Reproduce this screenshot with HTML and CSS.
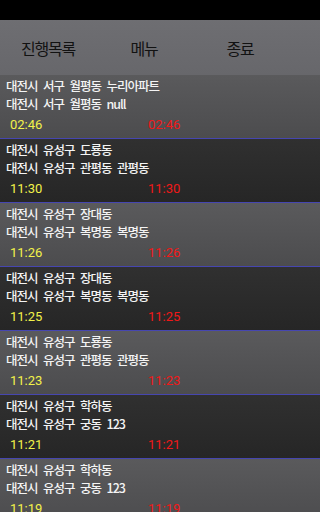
FILE: index.html
```html
<!DOCTYPE html>
<html lang="ko">
<head>
<meta charset="utf-8">
<meta name="viewport" content="width=device-width, initial-scale=1">
<link rel="stylesheet" href="styles.css">
</head>
<body>
<div class="status"></div>
<div class="menu">
  <div class="menu-item">진행목록</div>
  <div class="menu-item">메뉴</div>
  <div class="menu-item">종료</div>
</div>
<ul class="list">
  <li class="row light">
    <div class="addr">대전시 서구 월평동 누리아파트</div>
    <div class="addr">대전시 서구 월평동 null</div>
    <div class="times"><span class="t1">02:46</span><span class="t2">02:46</span></div>
  </li>
  <li class="row dark">
    <div class="addr">대전시 유성구 도룡동</div>
    <div class="addr">대전시 유성구 관평동 관평동</div>
    <div class="times"><span class="t1">11:30</span><span class="t2">11:30</span></div>
  </li>
  <li class="row light">
    <div class="addr">대전시 유성구 장대동</div>
    <div class="addr">대전시 유성구 복명동 복명동</div>
    <div class="times"><span class="t1">11:26</span><span class="t2">11:26</span></div>
  </li>
  <li class="row dark">
    <div class="addr">대전시 유성구 장대동</div>
    <div class="addr">대전시 유성구 복명동 복명동</div>
    <div class="times"><span class="t1">11:25</span><span class="t2">11:25</span></div>
  </li>
  <li class="row light">
    <div class="addr">대전시 유성구 도룡동</div>
    <div class="addr">대전시 유성구 관평동 관평동</div>
    <div class="times"><span class="t1">11:23</span><span class="t2">11:23</span></div>
  </li>
  <li class="row dark">
    <div class="addr">대전시 유성구 학하동</div>
    <div class="addr">대전시 유성구 궁동 123</div>
    <div class="times"><span class="t1">11:21</span><span class="t2">11:21</span></div>
  </li>
  <li class="row light">
    <div class="addr">대전시 유성구 학하동</div>
    <div class="addr">대전시 유성구 궁동 123</div>
    <div class="times"><span class="t1">11:19</span><span class="t2">11:19</span></div>
  </li>
</ul>
</body>
</html>
```

FILE: styles.css
```css
html, body {
  margin: 0;
  padding: 0;
  background: #000;
  overflow: hidden;
  font-family: "Noto Sans CJK KR", "Noto Sans", sans-serif;
}
.status {
  height: 20px;
  background: #000;
}
.menu {
  height: 55px;
  display: grid;
  grid-template-columns: repeat(3, 96px);
  align-items: center;
  background: linear-gradient(#6e6e72, #67676b);
}
.menu-item {
  text-align: center;
  font-size: 16px;
  letter-spacing: -1.2px;
  color: #121212;
  line-height: 20px;
}
.list {
  list-style: none;
  margin: 0;
  padding: 0;
}
.row {
  box-sizing: border-box;
  height: 64px;
  padding: 2px 0 1px 6px;
  border-bottom: 1px solid #4646b0;
}
.light {
  background: linear-gradient(#5a5a5c, #4c4c4e);
}
.dark {
  background: linear-gradient(#303030, #262626);
}
.addr {
  font-size: 12.5px;
  line-height: 18px;
  letter-spacing: -1px;
  word-spacing: 3px;
  color: #f4f4f4;
  font-weight: 500;
  white-space: nowrap;
}
.times {
  display: flex;
  padding-left: 4px;
  line-height: 24px;
  height: 24px;
  font-family: Roboto, "Liberation Sans", sans-serif;
  font-size: 13px;
}
.t1 {
  width: 138px;
  color: #f2f24a;
}
.t2 {
  color: #f01818;
}
```
